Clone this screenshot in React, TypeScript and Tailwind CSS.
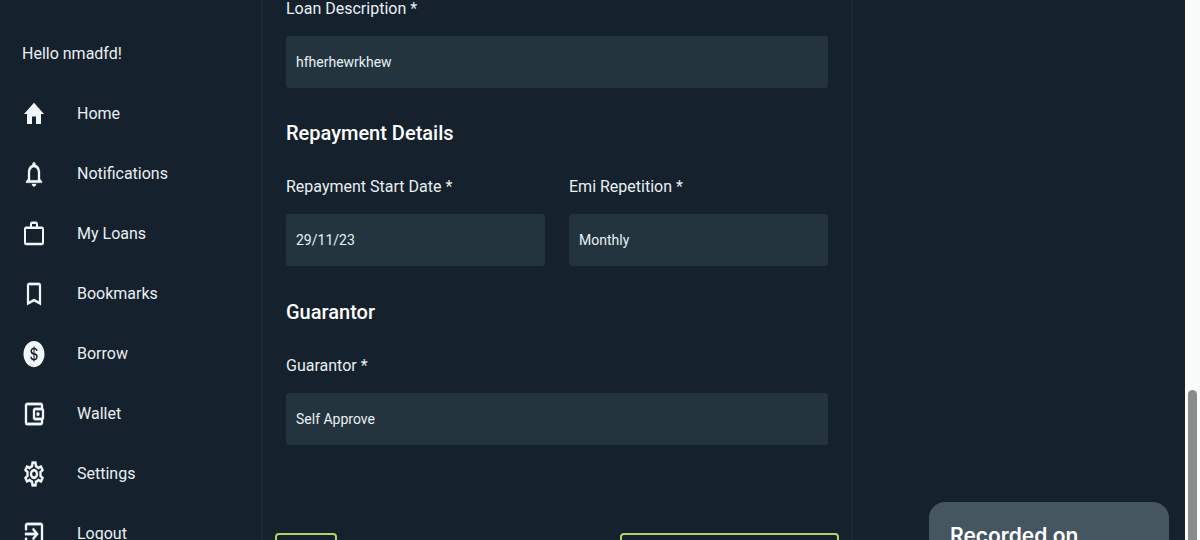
import type { IconType } from 'react-icons';
import { AiFillDollarCircle } from 'react-icons/ai';
import {
  MdBookmarkBorder,
  MdExitToApp,
  MdHome,
  MdNotificationsNone,
  MdOutlineAccountBalanceWallet,
  MdOutlineSettings,
  MdWorkOutline,
} from 'react-icons/md';

const links: { label: string; Icon: IconType; weight: number }[] = [
  { label: 'Home', Icon: MdHome, weight: 0 },
  { label: 'Notifications', Icon: MdNotificationsNone, weight: 0.3 },
  { label: 'My Loans', Icon: MdWorkOutline, weight: 0 },
  { label: 'Bookmarks', Icon: MdBookmarkBorder, weight: 0.2 },
  { label: 'Borrow', Icon: AiFillDollarCircle, weight: 0 },
  { label: 'Wallet', Icon: MdOutlineAccountBalanceWallet, weight: 0.3 },
  { label: 'Settings', Icon: MdOutlineSettings, weight: 0.3 },
  { label: 'Logout', Icon: MdExitToApp, weight: 0.3 },
];

function Field({ id, label, value }: { id: string; label: string; value: string }) {
  return (
    <div className="flex min-w-0 flex-1 flex-col gap-[15px]">
      <label htmlFor={id} className="text-base leading-6">
        {label}
      </label>
      <input
        id={id}
        defaultValue={value}
        className="h-[52px] w-full rounded-[3px] bg-[#24343e] px-[10px] text-sm text-[#e9eff3] outline-none"
      />
    </div>
  );
}

export default function App() {
  return (
    <div className="flex h-screen overflow-hidden bg-[#15212c] font-[Roboto,sans-serif] text-[#e9eff3]">
      <aside className="w-[261px] shrink-0">
        <p className="px-[22px] pt-[42px] text-base leading-6">Hello nmadfd!</p>
        <nav className="mt-[18px] flex flex-col">
          {links.map(({ label, Icon, weight }) => (
            <a key={label} href="#" className="flex h-[60px] items-center gap-[31px] px-[22px] text-base">
              <Icon
                className="h-[30px] w-6 shrink-0 text-[#f1f6f8] [&>path[fill=none]]:stroke-none"
                preserveAspectRatio="none"
                strokeWidth={weight}
              />
              {label}
            </a>
          ))}
        </nav>
      </aside>

      <main className="w-1/2 max-w-[592px] shrink-0 border-x-2 border-[#1d2833]">
        <form className="flex flex-col">
          <div className="flex flex-col px-[23px]">
            <div className="-mt-[3px] flex">
              <Field id="description" label="Loan Description *" value="hfherhewrkhew" />
            </div>
            <h2 className="mt-[31px] text-xl leading-7 font-medium text-white">Repayment Details</h2>
            <div className="mt-7 flex gap-6">
              <Field id="start" label="Repayment Start Date *" value="29/11/23" />
              <Field id="repetition" label="Emi Repetition *" value="Monthly" />
            </div>
            <h2 className="mt-8 text-xl leading-7 font-medium text-white">Guarantor</h2>
            <div className="mt-7 flex">
              <Field id="guarantor" label="Guarantor *" value="Self Approve" />
            </div>
          </div>
          <div className="mt-[88px] flex justify-between px-3">
            <button type="button" aria-label="Back" className="h-12 w-[62px] rounded border-2 border-[#b3d465]" />
            <button type="submit" aria-label="Submit" className="h-12 w-[219px] rounded border-2 border-[#b3d465]" />
          </div>
        </form>
      </main>

      <div className="flex flex-1 flex-col items-end justify-end overflow-hidden pr-4">
        <div className="h-[38px] w-60 rounded-t-2xl bg-[#455660] px-[21px] pt-[22px] font-[Inter,sans-serif] text-[21px] leading-6 font-semibold whitespace-nowrap text-white">
          Recorded on
        </div>
      </div>

      <div className="flex w-[15px] shrink-0 flex-col justify-end bg-[#fafbfb] px-[3px]">
        <div className="h-[150px] rounded-t-full bg-[#8b8b8b]" />
      </div>
    </div>
  );
}
